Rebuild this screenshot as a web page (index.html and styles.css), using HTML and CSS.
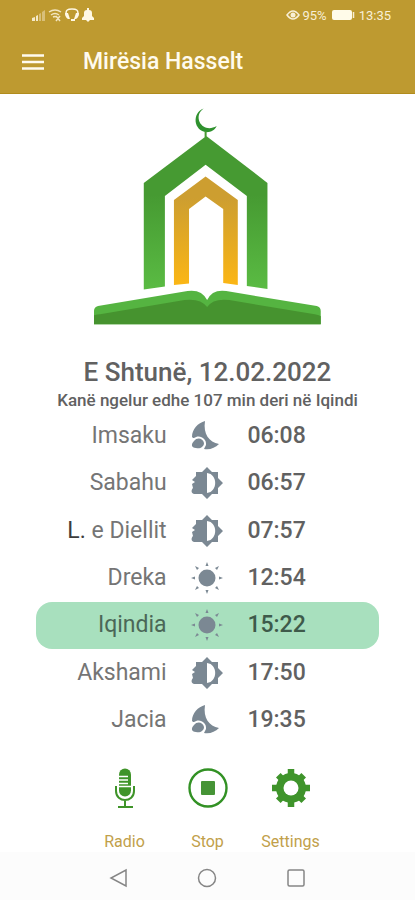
FILE: index.html
```html
<!DOCTYPE html>
<html lang="sq">
<head>
<meta charset="utf-8">
<meta name="viewport" content="width=device-width, initial-scale=1">
<title>Mirësia Hasselt</title>
<link rel="stylesheet" href="styles.css">
</head>
<body>
<svg class="symbols" aria-hidden="true">
  <symbol id="moon" viewBox="0 0 32 32">
    <path d="M14 1C7 3 1 9 1 17c1 1 1 1 2 1 5-4 13 0 12 7l-2 4c6 1 11-1 15-5C18 22 12 14 14 1Z"/>
    <path d="M3 21c3-4 9-3 10 2 0 4-4 6-8 5-5 0-5-4-2-7Z"/>
  </symbol>
  <symbol id="half" viewBox="0 0 32 32">
    <path fill-rule="evenodd" d="M16 0l5 5h6v6l5 5-5 5v6h-6l-5 5-5-5H3c-3-1-3-4-1-6l-1-4 3-2-3-2 4-4V5h6ZM16 6v20c11-1 11-19 0-20Z"/>
  </symbol>
  <symbol id="sun" viewBox="0 0 32 32">
    <circle cx="16" cy="16" r="8.5"/>
    <path d="M16 0l1.500 4h-3ZM16 32l1.500-4h-3ZM0 16l4-1.500v3ZM32 16l-4-1.500v3ZM4 4l4 2-2 2ZM28 4l-4 2 2 2ZM4 28l4-2-2-2ZM28 28l-4-2 2-2Z"/>
  </symbol>
</svg>

<header class="top">
  <div class="status">
    <div class="status-group">
      <svg width="62" height="14" viewBox="0 0 62 14" aria-hidden="true">
        <path d="M0 13v-3l3-1v4ZM4 13V8l2-1v6Z" fill="#f4e9c9"/>
        <path d="M7 13V6l2-1v8ZM10 13V4l3-2v11Z" fill="#d8bf79"/>
        <g fill="none" stroke="#f2e5c0" stroke-width="1.5"><path d="M17 4q6-4 12 0M19 7q4-3 8 0M21 9q2-1 4 0M24 8l4 5M28 8l-4 5"/></g>
        <path d="M35 9C32 1 37 1 40 1s8 0 5 8" fill="none" stroke="#fff8e4" stroke-width="1.5"/>
        <path d="M33 5h3l2 6h-2q-3-2-3-6ZM47 5h-3l-2 6h2q3-2 3-6ZM39 11h4v2h-4Z" fill="#fff8e4"/>
        <path d="M50 12v-2l2-2V5q0-3 3-3V0h2v2q3 0 3 3v3l2 2v2ZM54 12h4l-2 2Z" fill="#fff8e4"/>
      </svg>
    </div>
    <div class="status-group">
      <svg width="14" height="10" viewBox="0 0 14 10" aria-hidden="true"><path d="M1 5q6-8 12 0-6 8-12 0Z" fill="none" stroke="#f8efd6" stroke-width="1.5"/><circle cx="7" cy="5" r="2.5" fill="#f8efd6"/></svg>
      <span>95%</span>
      <svg class="battery" width="24" height="10" viewBox="0 0 24 10" aria-hidden="true"><rect width="20" height="10" rx="2" fill="#fffbe9"/><path d="M21.500 2v6" stroke="#f8efd6" stroke-width="1.5"/></svg>
      <span>13:35</span>
    </div>
  </div>
  <div class="bar">
    <button class="menu" type="button" aria-label="Menu">
      <svg width="24" height="18" viewBox="0 0 24 18"><path d="M1 2.500h22M1 9h22M1 15.500h22" stroke="#fffbee" stroke-width="2.600"/></svg>
    </button>
    <h1>Mirësia Hasselt</h1>
  </div>
</header>

<main>
  <svg class="logo" viewBox="94 108 227 217" role="img" aria-label="Mirësia">
    <defs>
      <linearGradient id="green" x1="0" y1="0" x2="0" y2="1"><stop offset="0.400" stop-color="#469a32"/><stop offset="1" stop-color="#5abb43"/></linearGradient>
      <linearGradient id="gold" x1="0" y1="0" x2="0" y2="1"><stop offset="0.200" stop-color="#cd9e30"/><stop offset="1" stop-color="#fbb615"/></linearGradient>
    </defs>
    <path d="M204 109.500C192 114 194 132 207 133c5 0 8-2 10-6-7 4-14 2-17-4-2-5-1-10 4-13.500Z" fill="#2f912e"/>
    <path d="M205 132h2v5l60.500 46.500v105.500l-20.500-3v-89.500L206 165.500l-40.500 31v90l-21 3v-106L205 138Z" fill="url(#green)"/>
    <path d="M206 177l32 23.500v84.500l-14.500-2v-73.500L206 197l-16.500 12.500v74l-15 1.500v-84.500Z" fill="url(#gold)"/>
    <path d="M95 324v-13q0-4 4-5l89-15q14-2 19.500 9 5-11 19-9l90 15q4 1 4 5v13Z" fill="#55b441"/>
    <path d="M95 324v-9q3-1 6-1l84-14q16-2 22.500 7 6-9 22-7l85 14q5 1 6 2v8Z" fill="#46932f"/>
  </svg>

  <h2>E Shtunë, 12.02.2022</h2>
  <p class="remaining">Kanë ngelur edhe 107 min deri në Iqindi</p>

  <table class="times">
    <tbody>
      <tr><th scope="row">Imsaku</th><td><svg><use href="#moon"/></svg></td><td>06:08</td></tr>
      <tr><th scope="row">Sabahu</th><td><svg><use href="#half"/></svg></td><td>06:57</td></tr>
      <tr><th scope="row"><span class="dark">L.</span> e Diellit</th><td><svg><use href="#half"/></svg></td><td>07:57</td></tr>
      <tr><th scope="row">Dreka</th><td><svg><use href="#sun"/></svg></td><td>12:54</td></tr>
      <tr class="next"><th scope="row">Iqindia</th><td><svg><use href="#sun"/></svg></td><td>15:22</td></tr>
      <tr><th scope="row">Akshami</th><td><svg><use href="#half"/></svg></td><td>17:50</td></tr>
      <tr><th scope="row">Jacia</th><td><svg><use href="#moon"/></svg></td><td>19:35</td></tr>
    </tbody>
  </table>

  <div class="actions">
    <button type="button">
      <svg viewBox="0 0 40 40"><rect x="14" y="0.500" width="12" height="28" rx="6" fill="#3f9429"/><path d="M14 8.500h9M14 12h9M14 15.500h9M14 18.500h12" stroke="#fff" stroke-width="1.400"/><path d="M11 18v5c0 12 18 12 18 0v-5M20 32v7M13 39h15" fill="none" stroke="#3f9429" stroke-width="2"/></svg>
      <span>Radio</span>
    </button>
    <button type="button">
      <svg viewBox="0 0 40 40"><circle cx="20" cy="20" r="18.500" fill="none" stroke="#329124" stroke-width="2.400"/><rect x="13" y="13" width="14" height="14" rx="1" fill="#469436"/></svg>
      <span>Stop</span>
    </button>
    <button type="button">
      <svg viewBox="0 0 40 40"><path d="M20 1v38M1 20h38M7.300 7.300l25.400 25.400M32.700 7.300L7.300 32.700" stroke="#3f942b" stroke-width="6.500"/><circle cx="20" cy="20" r="15" fill="#3f942b"/><circle cx="20" cy="20" r="7.500" fill="#fff"/></svg>
      <span>Settings</span>
    </button>
  </div>
</main>

<nav class="system">
  <button type="button" aria-label="Back"><svg viewBox="0 0 20 20"><path d="M17 2v16L2 10Z"/></svg></button>
  <button type="button" aria-label="Home"><svg viewBox="0 0 20 20"><circle cx="10" cy="10" r="8.500"/></svg></button>
  <button type="button" aria-label="Recent apps"><svg viewBox="0 0 20 20"><rect x="2" y="2" width="16" height="16" rx="1.500"/></svg></button>
</nav>
</body>
</html>
```
FILE: styles.css
```css
* {
  box-sizing: border-box;
}

body {
  margin: 0;
  min-height: 100vh;
  display: flex;
  flex-direction: column;
  background: #fff;
  color: #616161;
  font-family: Roboto, "Liberation Sans", sans-serif;
}

button {
  padding: 0;
  border: 0;
  background: none;
  font: inherit;
  color: inherit;
}

svg {
  display: block;
}

.symbols {
  position: absolute;
  width: 0;
  height: 0;
}

.top {
  background: #be9a30;
  color: #fffbee;
  border-bottom: 1px solid #b18c1c;
}

.status {
  display: flex;
  justify-content: space-between;
  align-items: center;
  height: 30px;
  padding: 0 24px 0 32px;
}

.status-group {
  display: flex;
  align-items: center;
  gap: 2px;
  font-size: 13px;
  color: #f8efd6;
}

.battery {
  margin: 0 1px 0 3px;
}

.bar {
  display: flex;
  align-items: center;
  gap: 38px;
  height: 63px;
  padding: 0 21px;
}

h1 {
  margin: 0;
  font-size: 23px;
  font-weight: 500;
}

main {
  flex: 1;
  display: flex;
  flex-direction: column;
  padding-top: 13px;
}

.logo {
  width: 55%;
  margin: 0 auto 31px;
}

h2 {
  margin: 0;
  font-size: 26px;
  line-height: 32px;
  font-weight: 500;
  text-align: center;
}

.remaining {
  margin: 0;
  font-size: 17px;
  line-height: 24px;
  font-weight: 500;
  text-align: center;
}

.times {
  flex: 1;
  display: grid;
  margin: 0 36px;
}

.times tbody {
  display: grid;
  grid-auto-rows: 1fr;
}

.times tr {
  display: grid;
  grid-template-columns: 131fr 81fr 132fr;
  align-items: center;
  border-radius: 16px;
}

.times th,
.times td {
  padding: 0;
  font-size: 23px;
  line-height: 28px;
}

.times th {
  font-weight: 400;
  color: #757575;
  text-align: right;
}

.times td {
  font-weight: 500;
}

.times svg {
  width: 32px;
  height: 32px;
  margin: 0 auto;
  fill: #7b8893;
}

.times .dark {
  color: #3c3c3c;
}

.times .next {
  background: #a8e0be;
}

.times .next th {
  color: #4b6757;
}

.times .next td {
  color: #3e5a4a;
}

.actions {
  display: grid;
  grid-template-columns: repeat(3, 1fr);
  padding: 24px 20% 0;
  font-size: 16px;
  line-height: 20px;
  color: #c1a04a;
}

.actions button {
  display: flex;
  flex-direction: column;
  align-items: center;
  gap: 24px;
}

.actions svg {
  width: 40px;
  height: 40px;
}

.system {
  display: grid;
  grid-template-columns: repeat(3, 1fr);
  justify-items: center;
  align-items: center;
  height: 48px;
  padding: 4px 18% 0;
  background: #fcfcfc;
}

.system svg {
  width: 20px;
  height: 20px;
  fill: none;
  stroke: #858585;
  stroke-width: 1.5px;
}
```
